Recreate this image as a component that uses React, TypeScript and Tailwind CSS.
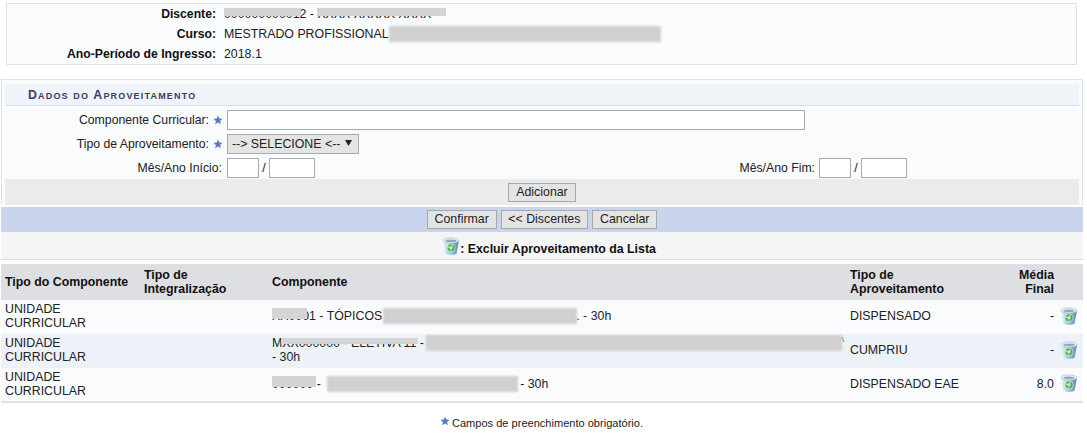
import type { ReactNode } from 'react';

/** Small blue star marking a required field */
function Star() {
    return (
        <svg width="10" height="10" viewBox="0 0 10 10" className="shrink-0">
            <path d="M5 .4 6.3 3.4 9.6 3.7 7.1 5.9 7.9 9.2 5 7.5 2.1 9.2 2.9 5.9.4 3.7 3.7 3.4Z" fill="#5a7cc4" />
        </svg>
    );
}

/** Recycle bin icon used for the delete action */
function Trash({ id }: { id: string }) {
    return (
        <svg width="18" height="19" viewBox="0 0 18 19" className="shrink-0">
            <defs>
                <linearGradient id={id} x1="0" x2="1" y1="0" y2="0">
                    <stop offset="0" stopColor="#eaf2f8" />
                    <stop offset="0.35" stopColor="#b4d4ec" />
                    <stop offset="1" stopColor="#5a88b6" />
                </linearGradient>
            </defs>
            <path d="M1 3.5 3.4 16.6C3.8 18.4 14.2 18.4 14.6 16.6L17 3.5Z" fill={`url(#${id})`} />
            <ellipse cx="9" cy="3.5" rx="8" ry="2.6" fill="#f1f5f8" stroke="#a6b9c9" strokeWidth="0.7" />
            <ellipse cx="9" cy="3.8" rx="5.8" ry="1.4" fill="#93a8b9" />
            <circle cx="9" cy="10.8" r="4.4" fill="#d8ecd8" opacity="0.7" />
            <circle cx="9" cy="10.8" r="2.7" fill="none" stroke="#48b543" strokeWidth="1.9" strokeDasharray="3.8 0.9" />
        </svg>
    );
}

/** Redacted block */
function Blur({ w, h = 16, className = '' }: { w: number; h?: number; className?: string }) {
    return (
        <span
            className={`inline-block bg-[#d0d0d0] align-middle blur-[1px] ${className}`}
            style={{ width: w, height: h }}
        />
    );
}

/** Placeholder text with a smear over its top part, the letter bottoms still show */
function Smear({ children, bar }: { children: ReactNode; bar: string }) {
    return (
        <span className="relative inline-block whitespace-nowrap">
            {children}
            <span className={`absolute bg-[#d4d4d4] blur-[0.6px] ${bar}`} />
        </span>
    );
}

function Btn({ children }: { children: ReactNode }) {
    return (
        <button className="h-[19px] border border-[#a8a8a8] bg-[#e4e4e4] px-[6.8px] text-[12.35px] leading-[15px] text-[#222]">
            {children}
        </button>
    );
}

function Field({ w }: { w: number }) {
    return <input className="h-[20px] border border-[#a9a9a9] bg-white" style={{ width: w }} />;
}

function Slash() {
    return <span className="w-[10px] text-center">/</span>;
}

const rows: { tipo: string; comp: ReactNode; aprov: string; media: string; alt?: boolean }[] = [
    {
        tipo: 'UNIDADE CURRICULAR',
        comp: (
            <div className="flex items-center">
                <Smear bar="left-0 top-[-1px] h-[11px] w-[35px]">XX0001</Smear>
                <span className="whitespace-pre"> - TÓPICOS</span>
                <Blur w={194} className="ml-[1px]" />
                <span className="ml-[-1px] whitespace-pre">. - 30h</span>
            </div>
        ),
        aprov: 'DISPENSADO',
        media: '-',
    },
    {
        tipo: 'UNIDADE CURRICULAR',
        comp: (
            <div>
                <div className="flex h-[14px] items-center whitespace-nowrap">
                    <Smear bar="left-[9px] top-[2px] h-[6px] w-[137px]">MXX000000 - ELETIVA 11</Smear>
                    <span className="whitespace-pre"> -</span>
                    <Blur w={416} h={16} className="ml-[2px]" />
                    <span className="mb-[7px] text-[7px] leading-none">\</span>
                </div>
                <div>- 30h</div>
            </div>
        ),
        aprov: 'CUMPRIU',
        media: '-',
        alt: true,
    },
    {
        tipo: 'UNIDADE CURRICULAR',
        comp: (
            <div className="flex items-center">
                <Smear bar="left-0 top-[-1px] h-[11px] w-[44px]">000000</Smear>
                <span className="whitespace-pre"> -</span>
                <Blur w={191} className="ml-[6px]" />
                <span className="ml-[-1px] whitespace-pre"> - 30h</span>
            </div>
        ),
        aprov: 'DISPENSADO EAE',
        media: '8.0',
    },
];

export default function App() {
    return (
        <div className="h-[438px] w-[1087px] overflow-hidden bg-white pt-[3px] font-['Liberation_Sans',Arial,sans-serif] text-[12.35px] leading-[14px] text-[#222]">
            {/* Student summary */}
            <div className="mx-[6px] h-[62px] w-[1071px] border border-[#dfe1e3] bg-[#f9fbfd]">
                {[
                    [
                        'Discente:',
                        <span className="flex items-center">
                            <Smear bar="left-0 top-[1px] h-[8px] w-[77px]">000000000012</Smear>
                            <span className="whitespace-pre"> - </span>
                            <Smear bar="left-0 top-[1px] h-[8px] w-[129px]">XXXX XXXXX XXXX</Smear>
                        </span>,
                    ],
                    [
                        'Curso:',
                        <span className="flex items-center">
                            MESTRADO PROFISSIONAL
                            <Blur w={272} h={16} className="blur-[1.5px]" />
                        </span>,
                    ],
                    ['Ano-Período de Ingresso:', <span>2018.1</span>],
                ].map(([label, value], i) => (
                    <div key={i} className="flex h-[20px] items-center">
                        <b className="w-[209px] text-right text-[12.2px] text-[#111]">{label}</b>
                        <div className="ml-[8px]">{value}</div>
                    </div>
                ))}
            </div>

            {/* Form */}
            <div className="mx-[1px] mt-[14px] w-[1082px] border-t border-l border-r border-[#dfe1e3] bg-[#f9fbfd] pt-[4px] text-[12.25px]">
                <div className="mx-[3px] flex h-[22px] w-[1074px] items-center border-b border-[#d5dde8] bg-[#eff3fa] pl-[23px] text-[12.35px] font-bold tracking-[1.17px] text-[#3a3a6e] [font-variant:small-caps]">
                    Dados do Aproveitamento
                </div>
                <div className="mt-[4px] flex h-[20px] items-center">
                    <span className="w-[207px] text-right">Componente Curricular:</span>
                    <span className="ml-[4px]"><Star /></span>
                    <span className="ml-[4px]"><Field w={578} /></span>
                </div>
                <div className="mt-[4px] flex h-[20px] items-center">
                    <span className="w-[207px] text-right">Tipo de Aproveitamento:</span>
                    <span className="ml-[4px]"><Star /></span>
                    <span className="ml-[4px] flex h-[20px] w-[132px] items-center border border-[#a9a9a9] bg-[#e4e4e4] pl-[4px] text-[12.35px]">
                        --&gt; SELECIONE &lt;--
                        <svg width="7" height="6" viewBox="0 0 7 6" className="mb-[2px] ml-[5px]"><path d="M0 0h7L3.5 6Z" fill="#222" /></svg>
                    </span>
                </div>
                <div className="mt-[4px] flex h-[20px] items-center">
                    <span className="w-[220px] text-right">Mês/Ano Início:</span>
                    <span className="ml-[5px]"><Field w={32} /></span>
                    <Slash />
                    <Field w={46} />
                    <span className="ml-[424px] w-[76px] shrink-0 whitespace-nowrap text-right">Mês/Ano Fim:</span>
                    <span className="ml-[4px]"><Field w={32} /></span>
                    <Slash />
                    <Field w={46} />
                </div>
                <div className="mx-[3px] mt-[1px] flex h-[26px] w-[1074px] items-center justify-center bg-[#ebebeb]">
                    <Btn>Adicionar</Btn>
                </div>
            </div>

            {/* Actions */}
            <div className="ml-[1px] mt-[2px] flex h-[25px] w-[1082px] items-center justify-center gap-[4px] bg-[#c8d5ec]">
                <Btn>Confirmar</Btn>
                <Btn>&lt;&lt; Discentes</Btn>
                <Btn>Cancelar</Btn>
            </div>

            {/* Legend */}
            <div className="ml-[1px] flex h-[28px] w-[1082px] items-center justify-center border-b border-[#dcdcdc] bg-[#f5f5f5] pl-[14px] font-bold text-[#111]">
                <span className="mt-[2px]"><Trash id="t0" /></span>
                <span className="pt-[6px]">: Excluir Aproveitamento da Lista</span>
            </div>

            {/* Table */}
            <table className="ml-[1px] mt-[4px] w-[1082px] table-fixed border-collapse border-b-2 border-[#dfe1e3]">
                <colgroup>
                    <col className="w-[139px]" />
                    <col className="w-[128px]" />
                    <col className="w-[578px]" />
                    <col className="w-[145px]" />
                    <col className="w-[64px]" />
                    <col className="w-[28px]" />
                </colgroup>
                <thead>
                    <tr className="h-[36px] bg-[#dedfe3] text-left font-bold text-[#111]">
                        <th className="pl-[4px]">Tipo do Componente</th>
                        <th className="pl-[4px]">Tipo de Integralização</th>
                        <th className="pl-[4px]">Componente</th>
                        <th className="pl-[4px]">Tipo de<br />Aproveitamento</th>
                        <th className="pr-[1px] text-right">Média<br />Final</th>
                        <th />
                    </tr>
                </thead>
                <tbody>
                    {rows.map((row, i) => (
                        <tr key={i} className={`h-[34px] ${row.alt ? 'bg-[#edf1f8]' : 'bg-[#f9fbfd]'}`}>
                            <td className="pb-[2px] pl-[4px]">{row.tipo}</td>
                            <td />
                            <td className="overflow-hidden pb-[2px] pl-[4px]">{row.comp}</td>
                            <td className="pb-[2px] pl-[4px]">{row.aprov}</td>
                            <td className="pb-[2px] pr-[1px] text-right">{row.media}</td>
                            <td className="pb-[2px] pl-[5px]"><Trash id={`t${i + 1}`} /></td>
                        </tr>
                    ))}
                </tbody>
            </table>

            <div className="mt-[13px] flex items-center justify-center pr-[4px] text-[11.05px]">
                <span className="mb-[4px] mr-[2px]"><Star /></span>
                Campos de preenchimento obrigatório.
            </div>
        </div>
    );
}
